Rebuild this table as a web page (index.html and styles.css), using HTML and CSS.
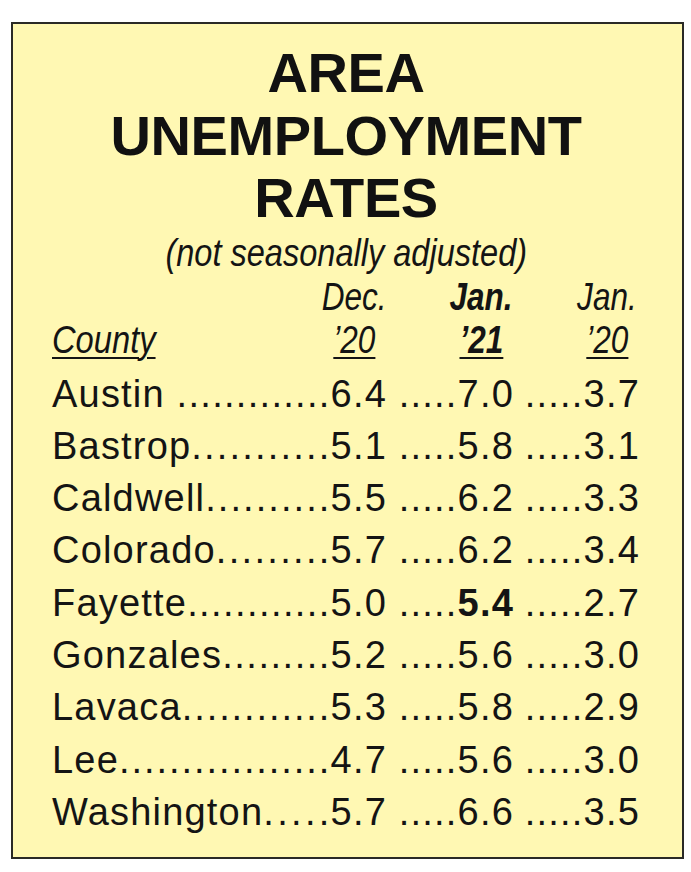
FILE: index.html
```html
<!DOCTYPE html>
<html lang="en">
<head>
<meta charset="utf-8">
<title>Area Unemployment Rates</title>
<link rel="stylesheet" href="styles.css">
</head>
<body>
<div class="card">
  <h1 class="title">AREA<br>UNEMPLOYMENT<br>RATES</h1>
  <p class="sub"><span class="sq">(not seasonally adjusted)</span></p>
  <div class="grid">
    <div class="hrow">
      <div class="hc"><span class="hlab"><span class="sq">Dec.</span></span></div>
      <div class="hc"><span class="hlab b"><span class="sq">Jan.</span></span></div>
      <div class="hc"><span class="hlab"><span class="sq">Jan.</span></span></div>
    </div>
    <div class="hrow">
      <div class="hc split"><span class="sq left u">County</span><span class="hlab"><span class="sq u">’20</span></span></div>
      <div class="hc"><span class="hlab b"><span class="sq u">’21</span></span></div>
      <div class="hc"><span class="hlab"><span class="sq u">’20</span></span></div>
    </div>

    <div class="row first">
      <div class="c1"><span class="name">Austin&nbsp;</span><span class="dots">. . . . . . . . . . . . .</span><span class="num">6.4</span></div>
      <div class="cn">.....7.0</div>
      <div class="cn">.....3.7</div>
    </div>
    <div class="row">
      <div class="c1"><span class="name">Bastrop</span><span class="dots">. . . . . . . . . . .</span><span class="num">5.1</span></div>
      <div class="cn">.....5.8</div>
      <div class="cn">.....3.1</div>
    </div>
    <div class="row">
      <div class="c1"><span class="name">Caldwell</span><span class="dots">. . . . . . . . . .</span><span class="num">5.5</span></div>
      <div class="cn">.....6.2</div>
      <div class="cn">.....3.3</div>
    </div>
    <div class="row">
      <div class="c1"><span class="name">Colorado</span><span class="dots">. . . . . . . . .</span><span class="num">5.7</span></div>
      <div class="cn">.....6.2</div>
      <div class="cn">.....3.4</div>
    </div>
    <div class="row">
      <div class="c1"><span class="name">Fayette</span><span class="dots">. . . . . . . . . . . .</span><span class="num">5.0</span></div>
      <div class="cn">.....<b class="bnum">5.4</b></div>
      <div class="cn">.....2.7</div>
    </div>
    <div class="row">
      <div class="c1"><span class="name">Gonzales</span><span class="dots">. . . . . . . . .</span><span class="num">5.2</span></div>
      <div class="cn">.....5.6</div>
      <div class="cn">.....3.0</div>
    </div>
    <div class="row">
      <div class="c1"><span class="name">Lavaca</span><span class="dots">. . . . . . . . . . . .</span><span class="num">5.3</span></div>
      <div class="cn">.....5.8</div>
      <div class="cn">.....2.9</div>
    </div>
    <div class="row">
      <div class="c1"><span class="name">Lee</span><span class="dots">. . . . . . . . . . . . . . . . .</span><span class="num">4.7</span></div>
      <div class="cn">.....5.6</div>
      <div class="cn">.....3.0</div>
    </div>
    <div class="row">
      <div class="c1"><span class="name">Washington</span><span class="dots">. . . . .</span><span class="num">5.7</span></div>
      <div class="cn">.....6.6</div>
      <div class="cn">.....3.5</div>
    </div>
  </div>
</div>
</body>
</html>
```

FILE: styles.css
```css
html, body {
  margin: 0;
  padding: 0;
  background: #ffffff;
}

body {
  font-family: "Liberation Sans", Arial, Helvetica, sans-serif;
  color: #141414;
}

.card {
  box-sizing: border-box;
  width: 673px;
  height: 837px;
  margin: 22px 0 0 11px;
  border: 2px solid #2a2a26;
  background: #fff8b3;
  padding: 18px 42px 0 39px;
}

.title {
  margin: 0;
  font-size: 56px;
  line-height: 62.5px;
  font-weight: bold;
  letter-spacing: -0.4px;
  text-align: center;
  color: #111;
}

.sub {
  margin: 0;
  font-style: italic;
  font-size: 38px;
  line-height: 46px;
  display: flex;
  justify-content: center;
}

.sq {
  display: inline-block;
  flex: none;
  white-space: nowrap;
  transform: scaleX(0.83);
}

.sub .sq {
  transform: scaleX(0.856);
}

.sq.left {
  transform-origin: left center;
  transform: scaleX(0.86);
}

.grid {
  display: grid;
  grid-template-columns: 1fr 127px 126px;
}

.hrow, .row {
  display: contents;
}

.hc {
  font-style: italic;
  font-size: 38px;
  line-height: 43px;
  display: flex;
  justify-content: flex-end;
}

.hc.split {
  justify-content: space-between;
}

.hlab {
  width: 66px;
  display: flex;
  justify-content: center;
}

.hlab.b {
  font-weight: bold;
}

.u {
  text-decoration: underline;
  text-decoration-thickness: 2px;
  text-underline-offset: 4px;
}

.row > div {
  font-size: 38px;
  line-height: 52.3px;
  letter-spacing: 1.2px;
  white-space: nowrap;
}

.row.first > div {
  margin-top: 6px;
}

.c1 {
  display: flex;
}

.name, .num {
  flex: none;
}

.dots {
  flex: 1;
  min-width: 0;
  white-space: normal;
  overflow: hidden;
  word-spacing: calc(-0.278em - 1.2px);
  text-align: justify;
  text-align-last: justify;
}

.cn {
  text-align: right;
}

.bnum {
  font-weight: bold;
}
```
